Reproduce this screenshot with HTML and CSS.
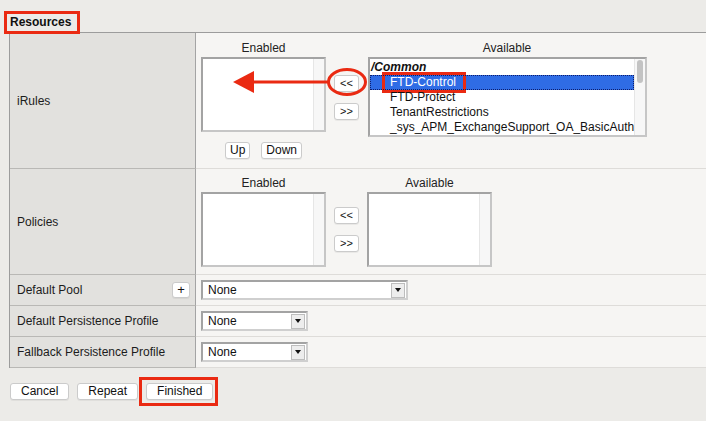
FILE: index.html
```html
<!DOCTYPE html>
<html lang="en">

<head>
    <meta charset="UTF-8">
    <meta name="viewport" content="width=device-width, initial-scale=1.0">
    <title>Resources</title>
    <link rel="stylesheet" href="styles.css">
</head>

<body>
    <div class="page">
        <div class="section-title"><span class="callout">Resources</span></div>

        <div class="props">
            <div class="prop-row">
                <div class="prop-label">iRules</div>
                <div class="prop-value prop-value-irules">
                    <div class="chooser">
                        <div class="chooser-head">Enabled</div>
                        <div></div>
                        <div class="chooser-head">Available</div>

                        <div class="listbox">
                            <div class="listbox-track"></div>
                        </div>
                        <div class="move-btns">
                            <button class="btn btn-move">&lt;&lt;</button>
                            <button class="btn btn-move">&gt;&gt;</button>
                        </div>
                        <div class="listbox listbox-wide">
                            <ul class="options">
                                <li class="group">/Common</li>
                                <li class="selected"><span class="callout-item">FTD-Control</span></li>
                                <li>FTD-Protect</li>
                                <li>TenantRestrictions</li>
                                <li>_sys_APM_ExchangeSupport_OA_BasicAuth</li>
                            </ul>
                            <div class="listbox-track">
                                <div class="thumb"></div>
                            </div>
                        </div>

                        <div class="order-btns">
                            <button class="btn">Up</button>
                            <button class="btn">Down</button>
                        </div>
                    </div>
                </div>
            </div>

            <div class="prop-row">
                <div class="prop-label">Policies</div>
                <div class="prop-value">
                    <div class="chooser">
                        <div class="chooser-head">Enabled</div>
                        <div></div>
                        <div class="chooser-head">Available</div>

                        <div class="listbox">
                            <div class="listbox-track"></div>
                        </div>
                        <div class="move-btns">
                            <button class="btn btn-move">&lt;&lt;</button>
                            <button class="btn btn-move">&gt;&gt;</button>
                        </div>
                        <div class="listbox">
                            <div class="listbox-track"></div>
                        </div>
                    </div>
                </div>
            </div>

            <div class="prop-row">
                <div class="prop-label">Default Pool <button class="btn btn-plus">+</button></div>
                <div class="prop-value prop-value-simple">
                    <div class="select select-wide">
                        <span class="select-value">None</span>
                        <span class="select-caret"></span>
                    </div>
                </div>
            </div>

            <div class="prop-row">
                <div class="prop-label">Default Persistence Profile</div>
                <div class="prop-value prop-value-simple">
                    <div class="select">
                        <span class="select-value">None</span>
                        <span class="select-caret"></span>
                    </div>
                </div>
            </div>

            <div class="prop-row">
                <div class="prop-label">Fallback Persistence Profile</div>
                <div class="prop-value prop-value-simple">
                    <div class="select">
                        <span class="select-value">None</span>
                        <span class="select-caret"></span>
                    </div>
                </div>
            </div>
        </div>

        <div class="form-actions">
            <button class="btn btn-action">Cancel</button>
            <button class="btn btn-action">Repeat</button>
            <span class="callout-box"><button class="btn btn-action">Finished</button></span>
        </div>

        <!-- annotation: circle round "<<" and arrow into Enabled list -->
        <svg class="callout-arrow" width="150" height="45" viewBox="0 0 150 45">
            <ellipse cx="122" cy="22" rx="18.5" ry="12.5" fill="none" stroke="#ea2a12" stroke-width="3" />
            <line x1="27" y1="22" x2="103.5" y2="22" stroke="#ea2a12" stroke-width="3" />
            <polygon points="8,22 29,11 29,33" fill="#ea2a12" />
        </svg>
    </div>
</body>

</html>
```

FILE: styles.css
```css
* {
    box-sizing: border-box;
}

body {
    margin: 0;
    background: #ecebe8;
    font-family: "Liberation Sans", Arial, sans-serif;
    font-size: 12px;
    color: #1c1c1c;
    overflow: hidden;
}

.page {
    position: relative;
    width: 706px;
    height: 421px;
}

.section-title {
    display: flex;
    align-items: flex-start;
    height: 32px;
    padding: 11px 0 0 4px;
}

.section-title .callout {
    position: relative;
    z-index: 2;
    display: block;
    padding: 1px 6px 2px 3px;
    line-height: 14px;
    font-weight: bold;
    color: #111;
    border: 3px solid #ea2a12;
}

.props {
    margin-left: 9px;
    width: 720px;
    border-top: 1px solid #9c9c9c;
    border-left: 1px solid #9c9c9c;
}

.prop-row {
    display: flex;
}

.prop-label {
    width: 186px;
    flex: none;
    display: flex;
    align-items: center;
    justify-content: space-between;
    padding: 0 5px 0 7px;
    background: #e2e1de;
    border-right: 1px solid #a4a4a4;
    border-bottom: 1px solid #b9b8b5;
}

.prop-value {
    flex: 1;
    padding: 7px 5px;
    background: #f6f5f3;
    border-bottom: 1px solid #dedcd9;
}

.prop-value-irules {
    padding: 8px 5px 9px;
}

.prop-value-simple {
    padding: 5px;
}

.chooser {
    display: grid;
    grid-template-columns: 125px 25px auto;
    column-gap: 8px;
    justify-content: start;
}

.chooser-head {
    text-align: center;
    line-height: 14px;
    margin-bottom: 2px;
    color: #222;
}

.listbox {
    position: relative;
    width: 125px;
    height: 75px;
    align-self: start;
    overflow: hidden;
    background: #fff;
    border: 2px solid #a3a3a3;
    border-right-color: #c6c6c6;
    border-bottom-color: #c6c6c6;
}

.listbox-wide {
    width: 279px;
    height: 80px;
    margin-left: 1px;
}

.listbox-track {
    position: absolute;
    top: 0;
    right: 0;
    bottom: 0;
    width: 11px;
    background: #f7f7f7;
    border-left: 1px solid #e6e6e6;
}

.listbox-track .thumb {
    margin: 1px 0 0 2px;
    width: 6px;
    height: 23px;
    border-radius: 3px;
    background: #c3c3c3;
}

.options {
    list-style: none;
    margin: 0 11px 0 0;
    padding: 1px 0 0;
}

.options li {
    line-height: 15px;
    padding-left: 20px;
    white-space: nowrap;
    color: #111;
}

.options .group {
    padding-left: 1px;
    font-weight: bold;
    font-style: italic;
}

.options .selected {
    background: #2f6ce5;
    color: #fff;
    outline: 1px dotted #0d1d6a;
    outline-offset: -1px;
}

.callout-item {
    display: inline-block;
    margin-left: -5px;
    padding: 0 7px 0 5px;
    box-shadow: 0 0 0 3px #ea2a12;
}

.move-btns {
    display: flex;
    flex-direction: column;
    gap: 11px;
    align-self: center;
}

.order-btns {
    display: flex;
    justify-content: center;
    gap: 11px;
    margin-top: 5px;
}

.btn {
    height: 17px;
    padding: 0 4px;
    font: 12px "Liberation Sans", Arial, sans-serif;
    line-height: 15px;
    color: #111;
    background: #fff;
    border: 1px solid #cbcbcb;
    border-radius: 3px;
    box-shadow: 0 1px 0 rgba(0, 0, 0, 0.05);
}

.btn-move {
    width: 25px;
    padding: 0;
    font-size: 11px;
}

.btn-plus {
    width: 18px;
    height: 16px;
    padding: 0;
    font-size: 13px;
    line-height: 14px;
}

.select {
    display: flex;
    align-items: center;
    width: 107px;
    height: 20px;
    background: #fff;
    border: 2px solid #a3a3a3;
    border-right-color: #cfcfcf;
    border-bottom-color: #cfcfcf;
}

.select-wide {
    width: 207px;
}

.select-value {
    flex: 1;
    padding-left: 5px;
    color: #111;
}

.select-caret {
    display: flex;
    align-items: center;
    justify-content: center;
    width: 14px;
    height: 15px;
    margin-right: 1px;
    background: #ededed;
    border: 1px solid #bdbdbd;
}

.select-caret::after {
    content: "";
    border-left: 3px solid transparent;
    border-right: 3px solid transparent;
    border-top: 4px solid #111;
}

.form-actions {
    display: flex;
    align-items: center;
    gap: 8px;
    margin-top: 9px;
    padding-left: 10px;
}

.btn-action {
    padding: 0 10px;
}

.callout-box {
    display: flex;
    margin-left: -7px;
    padding: 3px 2px 3px 4px;
    border: 3px solid #ea2a12;
}

.callout-arrow {
    position: absolute;
    left: 225px;
    top: 60px;
}
```
